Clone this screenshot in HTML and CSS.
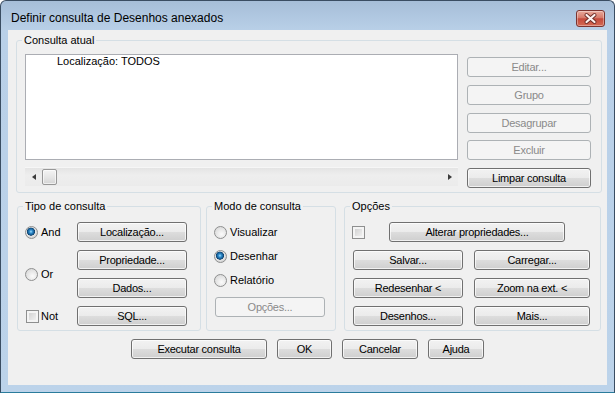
FILE: index.html
```html
<!DOCTYPE html>
<html lang="pt">
<head>
  <meta charset="UTF-8" />
  <title>Definir consulta de Desenhos anexados</title>
  <link rel="stylesheet" href="styles.css">
</head>
<body>
  <div class="window">
    <div class="titlebar">
      <span class="title">Definir consulta de Desenhos anexados</span>
      <button class="close" aria-label="Fechar">
        <svg width="29" height="17" viewBox="0 0 29 17">
          <path d="M10.5 5 L18.5 12 M18.5 5 L10.5 12" stroke="#6b2c26" stroke-width="4" stroke-linecap="round"/>
          <path d="M10.5 5 L18.5 12 M18.5 5 L10.5 12" stroke="#fdf3f1" stroke-width="2.2" stroke-linecap="round"/>
        </svg>
      </button>
    </div>

    <div class="client">
      <fieldset class="group current">
        <legend>Consulta atual</legend>
        <div class="body">
          <div class="list">
            <div class="list-body">Localização: TODOS</div>
            <div class="hscroll">
              <span class="arrow-box"><span class="arrow left"></span></span>
              <span class="thumb"></span>
              <span class="track"></span>
              <span class="arrow-box"><span class="arrow right"></span></span>
            </div>
          </div>
          <div class="side">
            <button class="btn" disabled>Editar...</button>
            <button class="btn" disabled>Grupo</button>
            <button class="btn" disabled>Desagrupar</button>
            <button class="btn" disabled>Excluir</button>
            <button class="btn">Limpar consulta</button>
          </div>
        </div>
      </fieldset>

      <div class="row">
        <fieldset class="group tipo">
          <legend>Tipo de consulta</legend>
          <div class="body">
            <label class="opt r1"><input type="radio" class="radio" name="tipo" checked> And</label>
            <label class="opt r23"><input type="radio" class="radio" name="tipo"> Or</label>
            <label class="opt r4"><input type="checkbox" class="check"> Not</label>
            <button class="btn b1">Localização...</button>
            <button class="btn b2">Propriedade...</button>
            <button class="btn b3">Dados...</button>
            <button class="btn b4">SQL...</button>
          </div>
        </fieldset>

        <fieldset class="group modo">
          <legend>Modo de consulta</legend>
          <div class="body">
            <label class="opt"><input type="radio" class="radio" name="modo"> Visualizar</label>
            <label class="opt"><input type="radio" class="radio" name="modo" checked> Desenhar</label>
            <label class="opt"><input type="radio" class="radio" name="modo"> Relatório</label>
            <button class="btn" disabled>Opções...</button>
          </div>
        </fieldset>

        <fieldset class="group opcoes">
          <legend>Opções</legend>
          <div class="body">
            <div class="opt-top">
              <input type="checkbox" class="check">
              <button class="btn alterar">Alterar propriedades...</button>
            </div>
            <button class="btn">Salvar...</button>
            <button class="btn">Carregar...</button>
            <button class="btn">Redesenhar &lt;</button>
            <button class="btn">Zoom na ext. &lt;</button>
            <button class="btn">Desenhos...</button>
            <button class="btn">Mais...</button>
          </div>
        </fieldset>
      </div>

      <div class="actions">
        <button class="btn executar">Executar consulta</button>
        <button class="btn ok">OK</button>
        <button class="btn cancelar">Cancelar</button>
        <button class="btn ajuda">Ajuda</button>
      </div>
    </div>
  </div>
</body>
</html>
```

FILE: styles.css
```css
* {
  box-sizing: border-box;
}
body {
  margin: 0;
  background: #fff;
  font-family: "Liberation Sans", Arial, sans-serif;
  font-size: 11px;
  color: #000;
}
.window {
  width: 615px;
  height: 393px;
  border: 1px solid #3a4d62;
  border-bottom-color: #2a7c9c;
  border-radius: 6px 6px 0 0;
  background: linear-gradient(#a6bed8, #b9d0e8 30px, #bcd3ea);
  display: flex;
  flex-direction: column;
}
.titlebar {
  height: 29px;
  display: flex;
  align-items: flex-start;
  padding: 0 9px 0 10px;
}
.title {
  padding-top: 10px;
  line-height: 15px;
  font-size: 12px;
}
.close {
  margin-left: auto;
  margin-top: 9px;
  width: 29px;
  height: 17px;
  padding: 0;
  border: 1px solid #7b3430;
  border-radius: 3px;
  background: linear-gradient(#e9aa9c, #d67a6a 45%, #c44a3c 52%, #d46a55);
  box-shadow: inset 0 0 0 1px rgba(255,255,255,0.35);
  display: flex;
  align-items: center;
  justify-content: center;
}
.close svg {
  display: block;
  margin: -1px;
}
.client {
  margin: 0 7px;
  height: 355px;
  background: #f0f0f0;
  padding: 4px 5px 0 8px;
}

/* group boxes */
.group {
  margin: 0;
  padding: 0;
  min-width: 0;
  border: 1px solid #d5dfe5;
  border-radius: 3px;
}
.group legend {
  margin-left: 5px;
  padding: 0 2px;
  line-height: 13px;
  font-size: 11px;
}
.current .body {
  display: flex;
  gap: 9px;
  padding: 7px 10px 4px 8px;
}
.list {
  width: 433px;
  display: flex;
  flex-direction: column;
}
.list-body {
  height: 106px;
  background: #fff;
  border: 1px solid #abadb3;
  padding-left: 31px;
  line-height: 13px;
}
.hscroll {
  margin-top: 7px;
  height: 19px;
  display: flex;
  align-items: center;
  background: linear-gradient(#e4e4e4, #eeeeee 40%, #ebebeb);
  border-top: 1px solid #f6f6f6;
}
.arrow-box {
  width: 17px;
  height: 17px;
  display: flex;
  align-items: center;
  justify-content: center;
}
.arrow {
  width: 0;
  height: 0;
  border-top: 3px solid transparent;
  border-bottom: 3px solid transparent;
}
.arrow.left {
  border-right: 4px solid #3c3c3c;
}
.arrow.right {
  border-left: 4px solid #3c3c3c;
}
.thumb {
  width: 15px;
  height: 16px;
  border: 1px solid #979797;
  border-radius: 2px;
  background: linear-gradient(#f4f4f4, #e6e6e6 50%, #d5d5d5);
  box-shadow: inset 0 0 0 1px rgba(255,255,255,0.6);
}
.track {
  flex: 1;
}
.side {
  width: 124px;
  height: 134px;
  padding-top: 3px;
  display: flex;
  flex-direction: column;
  justify-content: space-between;
}

/* buttons */
.btn {
  height: 20px;
  padding: 0;
  border: 1px solid #707070;
  border-radius: 3px;
  background: linear-gradient(#f2f2f2, #ebebeb 50%, #dddddd 50%, #cfcfcf);
  box-shadow: inset 0 0 0 1px rgba(255,255,255,0.7);
  font-family: "Liberation Sans", Arial, sans-serif;
  font-size: 11px;
  letter-spacing: -0.25px;
  line-height: 18px;
  color: #000;
  text-align: center;
}
.btn:disabled {
  border-color: #adb2b5;
  background: #f4f4f4;
  box-shadow: none;
  color: #8a8a8a;
}

/* radios and checkboxes */
.opt {
  display: flex;
  align-items: center;
  gap: 3px;
  white-space: nowrap;
}
.radio {
  appearance: none;
  margin: 0;
  width: 13px;
  height: 13px;
  border: 1px solid #8e8f8f;
  border-radius: 50%;
  background: radial-gradient(circle at 60% 65%, #fbfbfb, #d8d8d8 85%);
}
.radio:checked {
  background: radial-gradient(circle at 45% 42%, #a6e1ff 0, #3390cf 1.5px, #155a91 3.2px, #0e3f69 3.8px, #e9e9e9 4.3px, #d6d6d6 6px);
}
.check {
  appearance: none;
  margin: 0;
  width: 13px;
  height: 13px;
  border: 1px solid #8e8f8f;
  background: linear-gradient(135deg, #cbcbcb, #f7f7f7);
  box-shadow: inset 0 0 0 2px #f4f4f4;
}

.row {
  display: flex;
  margin: 7px 0 0 1px;
}
.modo {
  margin-left: 5px;
}
.opcoes {
  margin-left: 8px;
}
.tipo {
  width: 184px;
}
.tipo .body {
  display: grid;
  grid-template-columns: 52px 110px;
  grid-template-rows: repeat(4, 20px);
  row-gap: 8px;
  padding: 9px 13px 4px 7px;
}
.tipo .r1 { grid-column: 1; grid-row: 1; }
.tipo .r23 { grid-column: 1; grid-row: 2 / span 2; }
.tipo .r4 { grid-column: 1; grid-row: 4; }
.tipo .r4 .check { margin-left: 1px; margin-right: -1px; }
.tipo .b1 { grid-column: 2; grid-row: 1; }
.tipo .b2 { grid-column: 2; grid-row: 2; }
.tipo .b3 { grid-column: 2; grid-row: 3; }
.tipo .b4 { grid-column: 2; grid-row: 4; }

.modo {
  width: 130px;
}
.modo .body {
  display: flex;
  flex-direction: column;
  padding: 7px 10px 4px 7px;
}
.modo .opt {
  height: 24px;
}
.modo .btn {
  width: 110px;
  margin: 5px 0 0 1px;
}

.opcoes {
  width: 257px;
}
.opcoes .body {
  display: grid;
  grid-template-columns: 110px 116px;
  grid-auto-rows: 20px;
  column-gap: 11px;
  row-gap: 8px;
  padding: 9px 10px 4px 8px;
}
.opt-top {
  grid-column: 1 / -1;
  display: flex;
  align-items: center;
}
.opt-top .check {
  margin-left: -1px;
}
.alterar {
  width: 176px;
  margin-left: 24px;
}

.actions {
  display: flex;
  justify-content: center;
  gap: 10px;
  margin-top: 8px;
  padding-right: 3px;
}
.executar { width: 136px; }
.ok { width: 55px; }
.cancelar { width: 76px; }
.ajuda { width: 56px; }
```
